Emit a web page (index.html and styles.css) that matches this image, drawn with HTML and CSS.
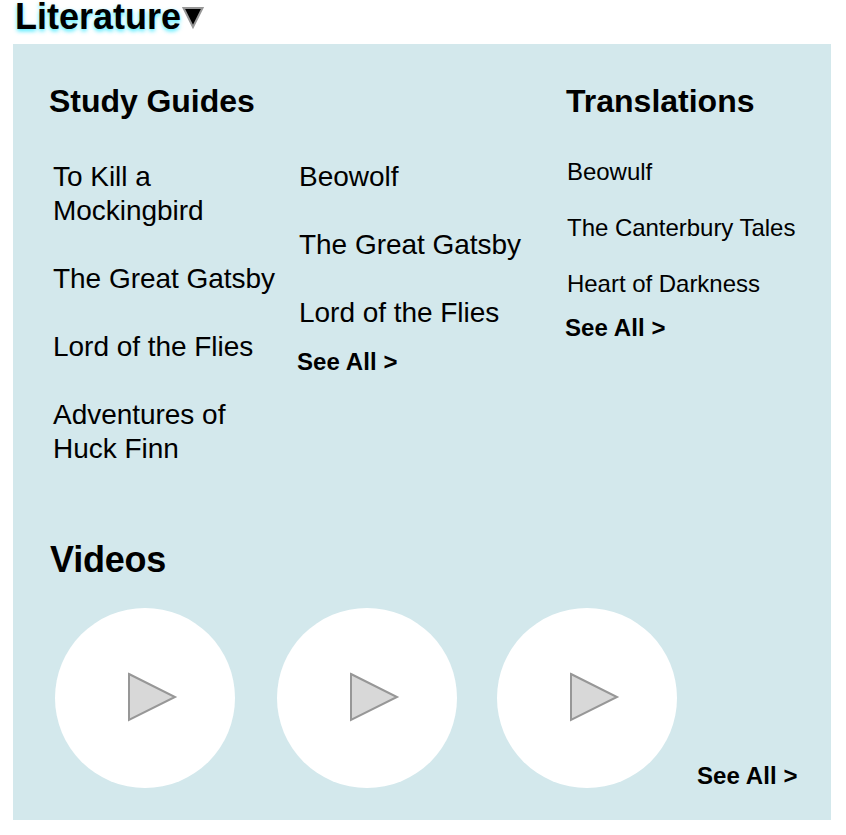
FILE: index.html
```html
<!DOCTYPE html>
<html lang="en">
<head>
<meta charset="utf-8">
<title>Literature</title>
<link rel="stylesheet" href="styles.css">
</head>
<body>
<header class="menu-title">
  <h1>Literature</h1>
  <svg class="caret" width="24" height="24" viewBox="0 0 24 24"><path d="M2.5 2H21.5L12 21Z" fill="#000" stroke="#979797" stroke-width="2"/></svg>
</header>
<main class="panel">
  <div class="top">
    <section class="guides">
      <h2>Study Guides</h2>
      <div class="columns">
        <ul class="list first">
          <li>To Kill a<br>Mockingbird</li>
          <li>The Great Gatsby</li>
          <li>Lord of the Flies</li>
          <li>Adventures of<br>Huck Finn</li>
        </ul>
        <div>
          <ul class="list">
            <li>Beowolf</li>
            <li>The Great Gatsby</li>
            <li>Lord of the Flies</li>
          </ul>
          <a class="see-all">See All &gt;</a>
        </div>
      </div>
    </section>
    <section class="translations">
      <h2>Translations</h2>
      <ul class="list small">
        <li>Beowulf</li>
        <li>The Canterbury Tales</li>
        <li>Heart of Darkness</li>
      </ul>
      <a class="see-all">See All &gt;</a>
    </section>
  </div>
  <section class="videos">
    <h2>Videos</h2>
    <div class="video-row">
      <div class="video"><svg width="52" height="50" viewBox="0 0 52 50"><path d="M2 2L48 25L2 48Z"/></svg></div>
      <div class="video"><svg width="52" height="50" viewBox="0 0 52 50"><path d="M2 2L48 25L2 48Z"/></svg></div>
      <div class="video"><svg width="52" height="50" viewBox="0 0 52 50"><path d="M2 2L48 25L2 48Z"/></svg></div>
      <a class="see-all">See All &gt;</a>
    </div>
  </section>
</main>
</body>
</html>
```
FILE: styles.css
```css
* { box-sizing: border-box; margin: 0; padding: 0; }
body { width: 846px; height: 835px; overflow: hidden; background: #fff; color: #000; font-family: "Liberation Sans", Arial, sans-serif; }
.menu-title { display: flex; height: 44px; padding-left: 15px; }
.menu-title h1 { width: 166px; font-size: 36px; line-height: 34px; text-shadow: 0 2px 4px rgba(0, 225, 255, 0.75); white-space: nowrap; }
.caret { margin-top: 6px; }
.panel { width: 818px; height: 776px; margin-left: 13px; padding: 38px 0 0 37px; background: #d3e8ec; }
.top { display: flex; height: 454px; }
.guides { width: 516px; }
h2 { font-size: 32px; line-height: 38px; white-space: nowrap; }
.guides h2 { margin-left: -1px; letter-spacing: -0.05px; }
.columns { display: flex; padding: 40px 0 0 3px; }
.first { width: 246px; }
.list { list-style: none; font-size: 28px; line-height: 34px; white-space: nowrap; letter-spacing: -0.03px; }
.list li + li { margin-top: 34px; }
.see-all { display: block; font-size: 24px; line-height: 28px; font-weight: bold; white-space: nowrap; letter-spacing: 0.08px; }
.columns .see-all { margin: 18px 0 0 -2px; }
.small { padding: 38px 0 0 1px; font-size: 24px; line-height: 28px; }
.small li + li { margin-top: 28px; }
.translations .see-all { margin: 16px 0 0 -1px; }
.videos h2 { font-size: 36px; line-height: 42px; padding-top: 3px; letter-spacing: -0.2px; }
.video-row { display: flex; align-items: flex-end; padding: 27px 0 0 5px; }
.video { display: flex; width: 180px; height: 180px; border-radius: 50%; background: #fff; align-items: center; padding: 0 0 2px 72px; margin-right: 42px; }
.video + .video + .video { margin: 0 20px 0 -2px; }
.video path { fill: #d8d8d8; stroke: #979797; stroke-width: 2; }
.video-row .see-all { margin-bottom: -2px; }
```
